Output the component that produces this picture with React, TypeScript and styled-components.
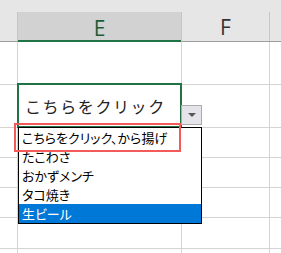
import React from "react";
import styled, { createGlobalStyle } from "styled-components";

const Global = createGlobalStyle`
  html, body { margin: 0; padding: 0; background: #ffffff; overflow: hidden; }
  body { width: 281px; height: 253px; font-family: "Noto Sans", "Noto Sans CJK JP", sans-serif; }
`;

const GRID = "#d4d4d4";
const GREEN = "#217346";

const Sheet = styled.div`
  position: relative;
  width: 281px;
  height: 253px;
  overflow: hidden;
  background: #fff;
`;

const TopStrip = styled.div`
  height: 12px;
  background: #e6e6e6;
`;

const cols = "18px 164px 88px 1fr";

const HeaderRow = styled.div`
  display: grid;
  grid-template-columns: ${cols};
  height: 30px;
  background: #e6e6e6;
  border-bottom: 1px solid #9d9d9d;
  box-sizing: border-box;
`;

const HeaderCell = styled.div<{ $selected?: boolean; $last?: boolean }>`
  display: flex;
  align-items: center;
  justify-content: center;
  box-sizing: border-box;
  border-right: ${(p) => (p.$last ? "none" : "1px solid #c6c6c6")};
  background: ${(p) => (p.$selected ? "#d2d2d2" : "#e6e6e6")};
  color: ${(p) => (p.$selected ? "#1e5b38" : "#333")};
  font-family: "Open Sans", "Noto Sans", sans-serif;
  font-size: 21px;
  font-weight: 400;
  padding-top: 1px;
  box-shadow: ${(p) => (p.$selected ? `inset 0 -2px 0 ${GREEN}` : "none")};
  margin-bottom: ${(p) => (p.$selected ? "-1px" : "0")};
`;

const Row = styled.div<{ $h: number }>`
  display: grid;
  grid-template-columns: ${cols};
  height: ${(p) => p.$h}px;
`;

const Cell = styled.div<{ $last?: boolean }>`
  box-sizing: border-box;
  border-right: ${(p) => (p.$last ? "none" : `1px solid ${GRID}`)};
  border-bottom: 1px solid ${GRID};
  display: flex;
  align-items: center;
  padding-left: 7px;
  font-family: "Noto Sans CJK JP", sans-serif;
  font-size: 16px;
  letter-spacing: 1.6px;
  color: #222;
  white-space: nowrap;
`;

const ActiveBox = styled.div`
  position: absolute;
  left: 17px;
  top: 83px;
  width: 165px;
  height: 45px;
  box-sizing: border-box;
  border: 2px solid ${GREEN};
`;

const DropButton = styled.div`
  position: absolute;
  left: 181px;
  top: 105px;
  width: 21px;
  height: 20px;
  box-sizing: border-box;
  border: 1px solid #ababab;
  background: #e4e4ea;
  display: flex;
  align-items: center;
  justify-content: center;
`;

const List = styled.div`
  position: absolute;
  left: 18px;
  top: 127px;
  width: 184px;
  box-sizing: border-box;
  border: 1px solid #000;
  background: #fff;
`;

const Item = styled.div<{ $active?: boolean }>`
  height: 19px;
  box-sizing: border-box;
  padding-top: 1px;
  line-height: 18px;
  padding-left: 3px;
  font-family: "Noto Sans CJK JP", sans-serif;
  font-size: 13px;
  font-feature-settings: "palt";
  white-space: nowrap;
  color: ${(p) => (p.$active ? "#fff" : "#000")};
  background: ${(p) => (p.$active ? "#0078d7" : "transparent")};
`;

const Highlight = styled.div`
  position: absolute;
  left: 14px;
  top: 123px;
  width: 167px;
  height: 29px;
  box-sizing: border-box;
  border: 2px solid #f35b5b;
`;

const rows = [43, 43, 30, 30, 30, 31, 20];
const items = ["こちらをクリック、から揚げ", "たこわさ", "おかずメンチ", "タコ焼き", "生ビール"];

export default function App() {
  return (
    <Sheet>
      <Global />
      <TopStrip />
      <HeaderRow>
        <HeaderCell />
        <HeaderCell $selected>E</HeaderCell>
        <HeaderCell>F</HeaderCell>
        <HeaderCell $last />
      </HeaderRow>
      {rows.map((h, i) => (
        <Row key={i} $h={h}>
          <Cell />
          <Cell>{i === 1 ? "こちらをクリック" : ""}</Cell>
          <Cell />
          <Cell $last />
        </Row>
      ))}
      <ActiveBox />
      <DropButton>
        <svg width="8" height="4" viewBox="0 0 8 4">
          <path d="M0 0 L8 0 L4 4 Z" fill="#555" />
        </svg>
      </DropButton>
      <List>
        {items.map((t, i) => (
          <Item key={t} $active={i === items.length - 1}>
            {t}
          </Item>
        ))}
      </List>
      <Highlight />
    </Sheet>
  );
}
